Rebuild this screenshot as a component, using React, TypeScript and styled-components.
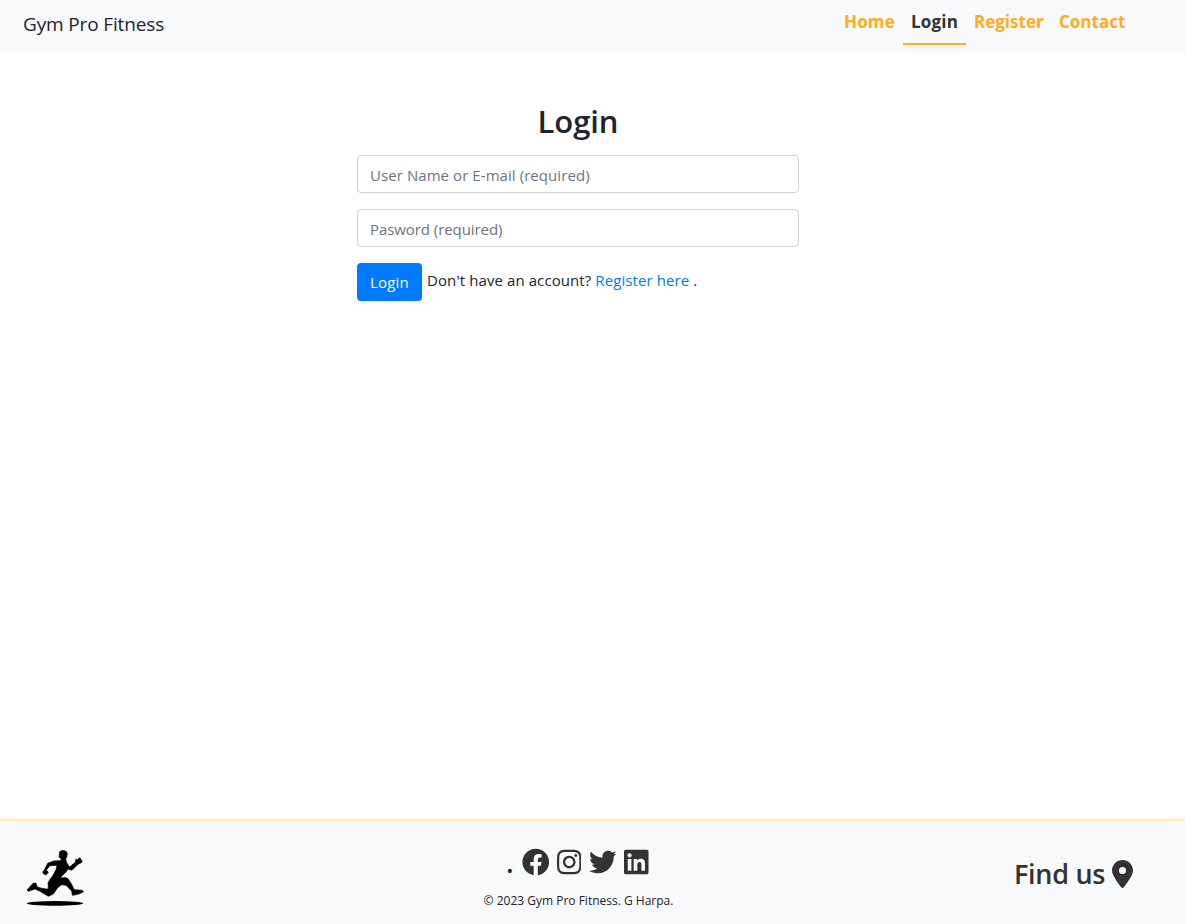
import React from "react";
import styled, { createGlobalStyle } from "styled-components";
import { FaFacebook, FaInstagram, FaTwitter, FaLinkedin } from "react-icons/fa";
import { FaLocationDot } from "react-icons/fa6";

const GlobalStyle = createGlobalStyle`
  *, *::before, *::after { box-sizing: border-box; }
  body {
    margin: 0;
    font-family: "Segoe UI", "Open Sans", "Noto Sans", sans-serif;
    font-size: 15px;
    line-height: 24px;
    color: #212529;
    background: #fff;
  }
  a { text-decoration: none; }
`;

const Page = styled.div`
  display: flex;
  flex-direction: column;
  height: 924px;
  overflow: hidden;
`;

const Header = styled.header`
  display: flex;
  justify-content: space-between;
  height: 53px;
  padding: 0 52px 0 23px;
  background: #f8f9fb;
`;

const Brand = styled.a`
  padding-top: 9px;
  font-size: 19px;
  line-height: 30px;
  letter-spacing: -0.14px;
  color: #212529;
  white-space: nowrap;
`;

const Nav = styled.nav`
  display: flex;
  height: 45px;
`;

const NavLink = styled.a<{ $active?: boolean; $width: number; $spacing: number }>`
  width: ${(p) => p.$width}px;
  padding: 8px 0 0 8px;
  font-size: 17px;
  font-weight: 700;
  line-height: 27px;
  letter-spacing: ${(p) => p.$spacing}px;
  white-space: nowrap;
  color: ${(p) => (p.$active ? "#333" : "#ffae1a")};
  border-bottom: 2px solid ${(p) => (p.$active ? "#ffae1a" : "transparent")};
`;

const Main = styled.main`
  flex: 1;
  padding: 49px 0 0 357px;
`;

const Form = styled.form`
  display: flex;
  flex-direction: column;
  width: 442px;
`;

const Title = styled.h2`
  margin: 0 0 15px;
  font-size: 31px;
  font-weight: 600;
  line-height: 38px;
  letter-spacing: -0.1px;
  text-align: center;
`;

const Field = styled.input<{ $spacing: number }>`
  height: 38px;
  margin: 0 0 16px;
  padding: 8px 12px 6px;
  font: inherit;
  border: 1px solid #ced4da;
  border-radius: 4px;
  background: #fff;
  &::placeholder {
    color: #6c757d;
    opacity: 1;
    letter-spacing: ${(p) => p.$spacing}px;
  }
`;

const Actions = styled.div`
  display: flex;
  align-items: flex-start;
`;

const SubmitButton = styled.button`
  width: 65px;
  height: 38px;
  padding: 0;
  font: inherit;
  letter-spacing: 0.2px;
  color: #fff;
  background: #007bff;
  border: 0;
  border-radius: 4px;
`;

const Prompt = styled.p`
  margin: 5px 0 0 5px;
  letter-spacing: 0.09px;
  white-space: nowrap;
  a { color: #007bff; }
`;

const Footer = styled.footer`
  display: grid;
  grid-template-columns: 110px 1fr 171px;
  height: 103px;
  background: #f8f9fb;
  box-shadow: 0 -1px 3px rgba(255, 174, 26, 0.5);
`;

const Logo = styled.svg`
  margin: 24px 0 0 22px;
`;

const Center = styled.div`
  display: flex;
  flex-direction: column;
  align-items: center;
  padding: 24px 0 0 33px;
`;

const Socials = styled.div`
  display: flex;
  align-items: center;
  gap: 7.8px;
  height: 34px;
  margin-right: 2px;
  color: #333;
  svg { display: block; height: 28px; }
`;

const Dot = styled.span`
  font-size: 28px;
  line-height: 34px;
  font-weight: 600;
  color: #212529;
`;

const Copyright = styled.small`
  margin-top: 12px;
  font-size: 12px;
  line-height: 20px;
  white-space: nowrap;
`;

const FindUs = styled.a`
  display: flex;
  align-items: center;
  gap: 7px;
  height: 34px;
  margin-top: 36px;
  font-size: 27px;
  font-weight: 600;
  letter-spacing: -0.3px;
  color: #333;
  white-space: nowrap;
  svg { width: 21px; height: 28px; }
`;

function Runner() {
  return (
    <Logo width="66" height="65" viewBox="0 0 198 195" fill="#000" aria-label="Runner">
      <path stroke="#000" strokeWidth="2" strokeLinejoin="round" d="M113 20Q119 15 128 17Q136 19 136 27Q135 36 131 42L134 53L142 66L160 52L162 42L167 44L173 38L179 46L180 52L169 57L150 76L138 72L131 82L119 94L116 100Q130 95 138 101L147 115L157 134L181 136L184 141L168 148L151 151L149 138L132 121L119 119L107 128L94 147L79 154L54 139L39 132L20 139L15 135L33 115L42 114L45 125L56 129L77 133L79 126L78 114Q82 103 92 93L102 74L105 61L84 62L73 75L79 82L72 90L65 87L62 81L67 75L77 55L95 48L113 47L119 43L111 36Z" />
      <ellipse cx="99" cy="175" rx="85" ry="7" />
    </Logo>
  );
}

export default function App() {
  return (
    <>
      <GlobalStyle />
      <Page>
        <Header>
          <Brand>Gym Pro Fitness</Brand>
          <Nav>
            <NavLink $width={67} $spacing={0.15}>Home</NavLink>
            <NavLink $active $width={63} $spacing={0.2}>Login</NavLink>
            <NavLink $width={85} $spacing={0}>Register</NavLink>
            <NavLink $width={82} $spacing={0}>Contact</NavLink>
          </Nav>
        </Header>
        <Main>
          <Form>
            <Title>Login</Title>
            <Field $spacing={0.07} placeholder="User Name or E-mail (required)" />
            <Field $spacing={-0.07} type="password" placeholder="Pasword (required)" />
            <Actions>
              <SubmitButton type="button">Login</SubmitButton>
              <Prompt>
                Don't have an account? <a>Register here</a> .
              </Prompt>
            </Actions>
          </Form>
        </Main>
        <Footer>
          <Runner />
          <Center>
            <Socials>
              <Dot>.</Dot>
              <FaFacebook size={27.5} />
              <FaInstagram size={24.5} />
              <FaTwitter size={27.5} />
              <FaLinkedin size={24.5} />
            </Socials>
            <Copyright>© 2023 Gym Pro Fitness. G Harpa.</Copyright>
          </Center>
          <FindUs>
            Find us <FaLocationDot size={28} />
          </FindUs>
        </Footer>
      </Page>
    </>
  );
}
